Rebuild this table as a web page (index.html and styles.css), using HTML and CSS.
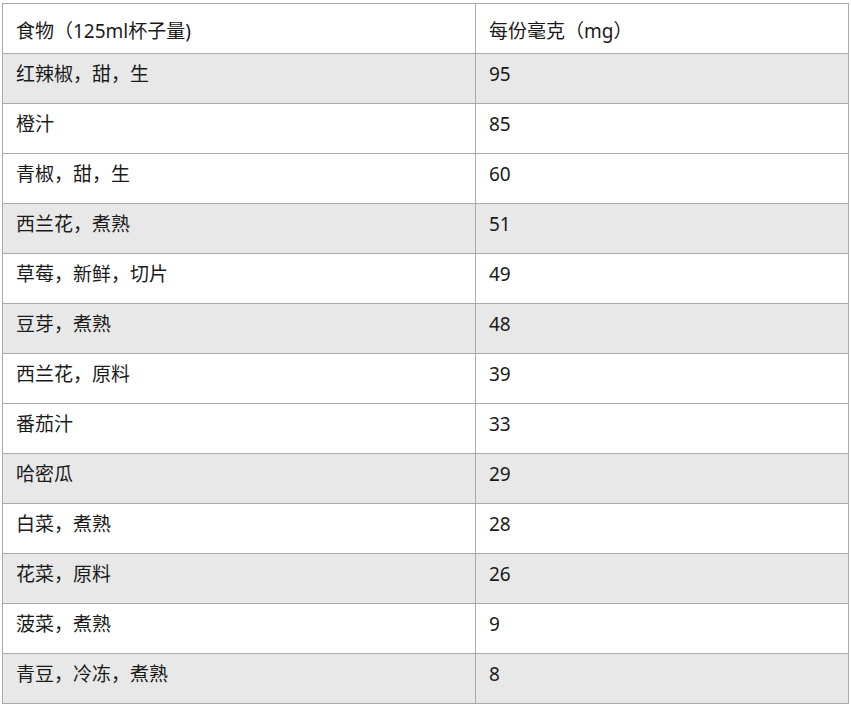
FILE: index.html
```html
<!DOCTYPE html>
<html lang="zh">
<head>
<meta charset="utf-8">
<link rel="stylesheet" href="styles.css">
</head>
<body>
<table class="data">
  <thead>
    <tr><th class="c1">食物（125ml杯子量)</th><th class="c2">每份毫克（mg）</th></tr>
  </thead>
  <tbody>
    <tr class="alt"><td>红辣椒，甜，生</td><td>95</td></tr>
    <tr><td>橙汁</td><td>85</td></tr>
    <tr><td>青椒，甜，生</td><td>60</td></tr>
    <tr class="alt"><td>西兰花，煮熟</td><td>51</td></tr>
    <tr><td>草莓，新鲜，切片</td><td>49</td></tr>
    <tr class="alt"><td>豆芽，煮熟</td><td>48</td></tr>
    <tr><td>西兰花，原料</td><td>39</td></tr>
    <tr><td>番茄汁</td><td>33</td></tr>
    <tr class="alt"><td>哈密瓜</td><td>29</td></tr>
    <tr><td>白菜，煮熟</td><td>28</td></tr>
    <tr class="alt"><td>花菜，原料</td><td>26</td></tr>
    <tr><td>菠菜，煮熟</td><td>9</td></tr>
    <tr class="alt"><td>青豆，冷冻，煮熟</td><td>8</td></tr>
  </tbody>
</table>
</body>
</html>
```
FILE: styles.css
```css
html, body {
  margin: 0;
  padding: 0;
  background: #fff;
}
body {
  padding: 3px 0 0 2px;
  font-family: "Noto Sans", "Noto Sans CJK SC", sans-serif;
  color: #1a1a1a;
}
.data {
  border-collapse: collapse;
  width: 847px;
  table-layout: fixed;
}
.data th, .data td {
  border: 1px solid #aaa;
  text-align: left;
  font-weight: normal;
  font-size: 19px;
  line-height: 24px;
  padding: 0 13px;
  height: 50px;
  box-sizing: border-box;
}
.data th {
  padding-top: 4px;
}
.data td {
  padding-bottom: 9px;
}
.data .c1 { width: 473px; }
.data tr.alt td { background: #e8e8e8; }
```
